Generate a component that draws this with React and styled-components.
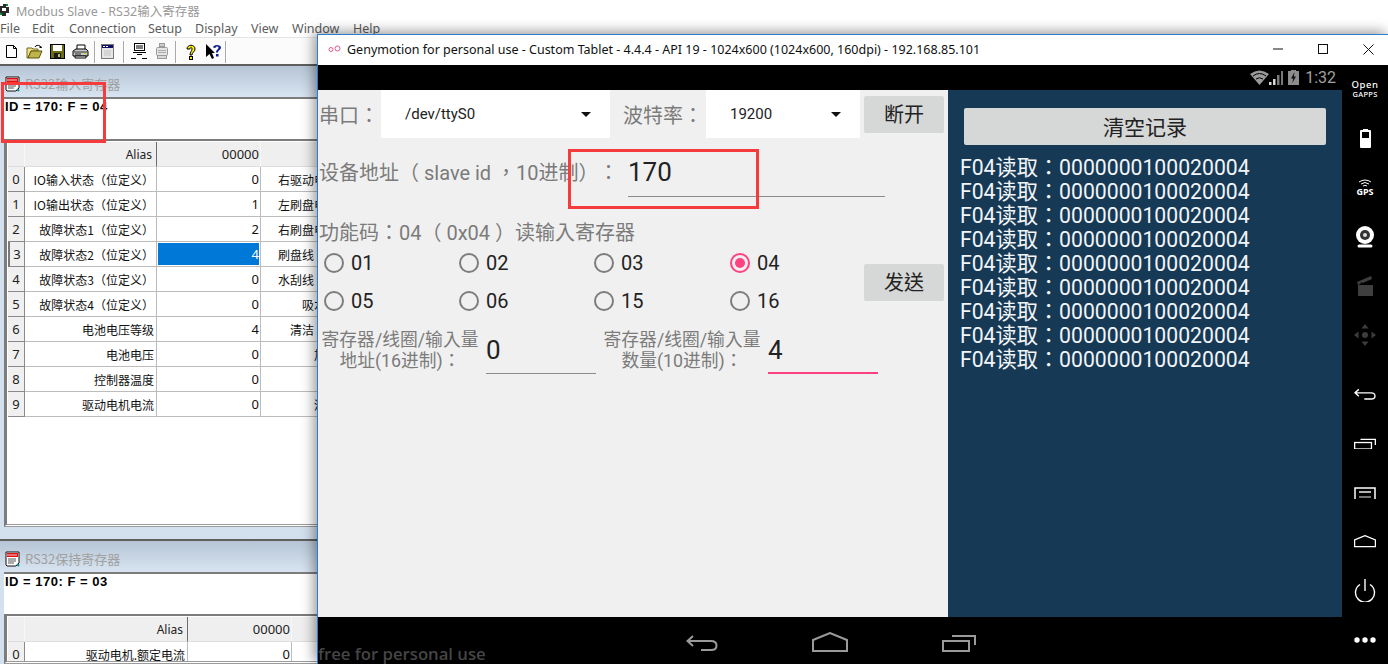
import React from 'react';
import styled, { createGlobalStyle } from 'styled-components';

const GlobalStyle = createGlobalStyle`
  html, body {
    margin: 0;
    padding: 0;
    background: #ffffff;
    overflow: hidden;
  }
  * { box-sizing: border-box; }
`;

const WIN_FONT = `"Noto Sans", "Noto Sans CJK SC", sans-serif`;
const CJK_FONT = `"Noto Sans CJK SC", "Noto Sans", sans-serif`;
const DROID_FONT = `Roboto, "Noto Sans CJK TC", sans-serif`;

// --- desktop ---

const Desktop = styled.div`
  position: relative;
  width: 1388px;
  height: 664px;
  overflow: hidden;
  background: #ffffff;
  text-spacing-trim: space-all;
`;

const Annotation = styled.div`
  position: absolute;
  left: ${(p) => p.$x}px;
  top: ${(p) => p.$y}px;
  width: ${(p) => p.$w}px;
  height: ${(p) => p.$h}px;
  border: 3px solid #f53b3b;
  z-index: 5;
`;

// --- modbus slave window ---

const SlaveWindow = styled.div`
  position: absolute;
  left: 0;
  top: 0;
  width: 1388px;
  height: 664px;
  display: flex;
  flex-direction: column;
  background: #ffffff;
`;

const SlaveTitle = styled.div`
  height: 20px;
  display: flex;
  align-items: center;
  gap: 7px;
  font: 12.5px ${WIN_FONT};
  color: #999999;
`;

const MenuBar = styled.div`
  height: 17px;
  display: flex;
  align-items: center;
  font: 12.5px ${WIN_FONT};
  color: #5c5c5c;
`;

const MenuItem = styled.span`
  width: ${(p) => p.$w}px;
  flex: none;
`;

const Toolbar = styled.div`
  height: 27px;
  width: 318px;
  display: flex;
  align-items: center;
  padding-top: 1px;
  border-top: 1px solid #e4e4e4;
  background: #fbfbfb;
`;

const ToolButton = styled.div`
  width: 23px;
  height: 23px;
  display: flex;
  align-items: center;
  justify-content: center;
  flex: none;
`;

const ToolSep = styled.div`
  width: 2px;
  height: 22px;
  flex: none;
  margin: 0 ${(p) => p.$r}px 0 ${(p) => p.$l}px;
  background: #a9a9a9;
  border-right: 1px solid #ffffff;
`;

const MdiArea = styled.div`
  flex: 1;
  min-height: 0;
  display: flex;
  flex-direction: column;
  background: #d3e0ee;
`;

const MdiChild = styled.div`
  flex: none;
  height: ${(p) => p.$h}px;
  display: flex;
  flex-direction: column;
  border-top: 2px solid #5f5f5f;
`;

const ChildTitle = styled.div`
  flex: none;
  height: 31px;
  display: flex;
  align-items: center;
  gap: 5px;
  padding: 4px 0 0 5px;
  background: linear-gradient(180deg, #b6c5d5 0%, #d8e4f1 100%);
  font: 13px ${CJK_FONT};
  color: #a0a0a0;
`;

const ChildBody = styled.div`
  flex: 1;
  min-height: 0;
  margin-left: 4px;
  display: flex;
  flex-direction: column;
  overflow: hidden;
`;

const ChildBottom = styled.div`
  flex: none;
  height: 12px;
`;

const NoteBox = styled.div`
  flex: none;
  height: 44px;
  padding: 1px 0 0 1px;
  background: #ffffff;
  border-top: 2px solid #7c7c7c;
  border-bottom: 2px solid #7c7c7c;
  font: 700 13px/14px "Liberation Sans", sans-serif;
  letter-spacing: 0.5px;
  color: #000000;
  white-space: nowrap;
`;

const GridPane = styled.div`
  flex: 1;
  min-height: 0;
  background: #ffffff;
  border-left: 3px solid #7c7c7c;
  border-bottom: 3px double #9a9a9a;
  padding-top: 1px;
  padding-left: 1px;
  overflow: hidden;
`;

const Grid = styled.div`
  display: grid;
  grid-template-columns: 17px ${(p) => p.$alias}px 104px 131px;
  grid-auto-rows: 25px;
  font: 12px ${CJK_FONT};
  color: #111111;
`;

const HeadCell = styled.div`
  display: flex;
  align-items: center;
  justify-content: flex-end;
  padding-right: ${(p) => (p.$strong ? 4 : 2)}px;
  background: #efefef;
  border-right: 1px solid ${(p) => (p.$strong ? '#6d6d6d' : '#f7f7f7')};
  border-bottom: 1px solid #dddddd;
  font: 12px ${WIN_FONT};
  color: #222222;
`;

const HeadValue = styled(HeadCell)`
  font-size: 13px;
  padding-right: 1px;
`;

const IndexCell = styled.div`
  display: flex;
  align-items: center;
  justify-content: center;
  background: #f0f0f0;
  border-right: 1px solid #8a8a8a;
  border-bottom: 1px solid #8a8a8a;
  border-left: ${(p) => (p.$active ? '2px solid #7a7a7a' : '0')};
  font: 13px ${WIN_FONT};
  color: #222222;
`;

const AliasCell = styled.div`
  display: flex;
  align-items: center;
  justify-content: flex-end;
  padding-right: 2px;
  white-space: nowrap;
  border-right: 1px solid #bcbcbc;
  border-bottom: 1px solid #bcbcbc;
`;

const ValueCell = styled.div`
  display: flex;
  align-items: center;
  justify-content: flex-end;
  padding-right: 1px;
  border-right: 1px solid #bcbcbc;
  border-bottom: 1px solid #bcbcbc;
  font: 13px ${WIN_FONT};
  background: #ffffff;
  ${(p) => p.$selected && `
    color: #ffffff;
    background: #0078d7;
    box-shadow: inset 0 0 0 1px #ffffff;
  `}
`;

const NextCell = styled.div`
  display: flex;
  align-items: center;
  padding-left: ${(p) => p.$indent}px;
  white-space: nowrap;
  overflow: hidden;
  border-bottom: 1px solid #bcbcbc;
`;

// --- genymotion window ---

const GenyWindow = styled.div`
  position: absolute;
  left: 317px;
  top: 34px;
  width: 1071px;
  height: 630px;
  display: flex;
  flex-direction: column;
  border-top: 1px solid #2b7cd3;
  border-left: 1px solid #2b7cd3;
  background: #000000;
  box-shadow: -3px -2px 12px rgba(0, 0, 0, 0.42);
  z-index: 2;
`;

const GenyTitle = styled.div`
  flex: none;
  height: 30px;
  display: flex;
  align-items: center;
  padding: 0 0 2px 10px;
  background: #ffffff;
  font: 12.5px "Noto Sans", sans-serif;
  color: #111111;
`;

const GenyCaption = styled.span`
  margin-left: 6px;
  white-space: nowrap;
  flex: 1;
`;

const CaptionButton = styled.div`
  width: 45px;
  height: 28px;
  padding-left: 5px;
  display: flex;
  align-items: center;
  justify-content: center;
  flex: none;
`;

const GenyBody = styled.div`
  flex: 1;
  min-height: 0;
  display: flex;
`;

const Device = styled.div`
  width: 1024px;
  flex: none;
  display: flex;
  flex-direction: column;
`;

const StatusBar = styled.div`
  height: 25px;
  flex: none;
  display: flex;
  align-items: center;
  justify-content: flex-end;
  gap: 5px;
  padding-right: 6px;
  background: #000000;
`;

const WifiSlot = styled.span`
  display: flex;
  margin-right: -5px;
`;

const Clock = styled.span`
  font: 16px Roboto, sans-serif;
  color: #a0a0a0;
  margin-left: 1px;
`;

const AppBody = styled.div`
  height: 527px;
  flex: none;
  display: flex;
  background: #f0f0f0;
`;

const FormPanel = styled.div`
  width: 630px;
  flex: none;
  padding-left: 1px;
  display: flex;
  flex-direction: column;
  font-family: ${DROID_FONT};
  color: #7b7b7b;
`;

const SerialRow = styled.div`
  height: 48px;
  flex: none;
  display: flex;
  align-items: center;
`;

const FieldLabel = styled.span`
  flex: none;
  width: ${(p) => p.$w}px;
  padding-left: ${(p) => p.$pad || 0}px;
  font-size: 20px;
  line-height: 24px;
  white-space: nowrap;
`;

const SerialLabel = styled(FieldLabel)`
  padding-top: 3px;
`;

const Spinner = styled.div`
  flex: none;
  width: ${(p) => p.$w}px;
  height: 48px;
  display: flex;
  align-items: center;
  justify-content: space-between;
  padding: 0 19px 0 24px;
  background: #ffffff;
  color: #222222;
  font-size: 15px;
  &::after {
    content: '';
    border-left: 5px solid transparent;
    border-right: 5px solid transparent;
    border-top: 5px solid #111111;
  }
`;

const ActionButton = styled.div`
  flex: none;
  width: ${(p) => p.$w}px;
  height: 37px;
  margin-left: ${(p) => p.$left || 0}px;
  padding-top: 2px;
  display: flex;
  align-items: center;
  justify-content: center;
  border-radius: 2px;
  background: #d6d7d7;
  color: #222222;
  font: 20px/24px ${DROID_FONT};
`;

const AddressRow = styled.div`
  height: 70px;
  flex: none;
  display: flex;
  align-items: center;
`;

const UnderlineInput = styled.div`
  flex: none;
  width: ${(p) => p.$w}px;
  height: 47px;
  padding-top: ${(p) => p.$top}px;
  border-bottom: ${(p) => (p.$focus ? '2px solid #ff4081' : '1px solid #8c8c8c')};
  color: #222222;
  font-size: 26px;
  line-height: 30px;
`;

const FunctionLabel = styled.div`
  margin-top: 14px;
  height: 22px;
  flex: none;
  font-size: 20px;
  line-height: 22px;
  white-space: nowrap;
`;

const RadioBlock = styled.div`
  flex: none;
  display: flex;
  align-items: center;
  height: 76px;
`;

const RadioGrid = styled.div`
  flex: none;
  width: 545px;
  display: grid;
  grid-template-columns: 135px 135px 136px 139px;
  grid-auto-rows: 38px;
  padding-left: 5px;
`;

const RadioItem = styled.div`
  display: flex;
  align-items: center;
  gap: 7px;
  color: #222222;
  font-size: 20px;
  line-height: 24px;
`;

const RadioMark = styled.span`
  width: 20px;
  height: 20px;
  flex: none;
  border-radius: 50%;
  border: 2px solid ${(p) => (p.$on ? '#ff4081' : '#7d7d7d')};
  display: flex;
  align-items: center;
  justify-content: center;
  &::after {
    content: '';
    display: ${(p) => (p.$on ? 'block' : 'none')};
    width: 10px;
    height: 10px;
    border-radius: 50%;
    background: #ff4081;
  }
`;

const RegisterRow = styled.div`
  flex: none;
  margin-top: 7px;
  display: flex;
  align-items: flex-start;
`;

const TwoLineLabel = styled.div`
  flex: none;
  width: ${(p) => p.$w}px;
  margin: 2px ${(p) => p.$after || 0}px 0 0;
  text-align: center;
  font-size: 17.8px;
  line-height: 21px;
`;

const LogPanel = styled.div`
  flex: 1;
  display: flex;
  flex-direction: column;
  padding: 18px 16px 0 12px;
  background: #163a56;
  font-family: ${DROID_FONT};
`;

const ClearButton = styled(ActionButton)`
  margin: 0 0 11px 4px;
  width: auto;
  align-self: stretch;
  font-size: 21px;
`;

const LogLine = styled.div`
  height: 24px;
  line-height: 24px;
  font-size: 21.2px;
  color: #f2f5f7;
  white-space: nowrap;
`;

const NavBar = styled.div`
  position: relative;
  flex: 1;
  display: flex;
  background: #000000;
`;

const NavSlot = styled.div`
  position: absolute;
  left: ${(p) => p.$x}px;
  top: ${(p) => p.$y}px;
  display: flex;
`;

const Watermark = styled.span`
  position: absolute;
  left: 0;
  top: 27px;
  font: 600 16.7px/20px "Open Sans", sans-serif;
  color: #454545;
  white-space: nowrap;
`;

const Sidebar = styled.div`
  width: 46px;
  flex: none;
  display: flex;
  flex-direction: column;
  color: #ffffff;
`;

const SideGroup = styled.div`
  flex: none;
  margin-bottom: ${(p) => p.$gap || 0}px;
`;

const SideSlot = styled.div`
  height: 49px;
  display: flex;
  flex-direction: column;
  align-items: center;
  justify-content: center;
`;

const GappsOpen = styled.span`
  font: 500 9.5px/10px "Noto Sans", sans-serif;
  letter-spacing: 0.6px;
  color: #ffffff;
`;

const GappsName = styled.span`
  font: 500 7.5px/9px "Noto Sans", sans-serif;
  letter-spacing: 0.3px;
  color: #ffffff;
`;

const GpsText = styled.span`
  font: 700 9px/10px "Noto Sans", sans-serif;
  color: #ffffff;
`;

// --- drawn icons ---

const AppIcon = () => (
  <svg width="9" height="12" viewBox="0 0 9 12">
    <path d="M0 2h3V0h3v3h3v6H6v3H2V9H0z" fill="#2a2a2a" />
    <rect x="2" y="4" width="4" height="3" fill="#ffffff" />
    <rect x="0" y="9" width="2" height="2" fill="#0a8f3c" />
    <rect x="6" y="0" width="2" height="2" fill="#0a8f3c" />
  </svg>
);

const DocIcon = () => (
  <svg width="15" height="16" viewBox="0 0 15 16">
    <path d="M1 1h13v11l-3 3H2l-1-1z" fill="#ffffff" stroke="#111" />
    <rect x="2" y="2" width="11" height="4" fill="#e01010" />
    <path d="M3 3v2M5 3v2M7 3v2M9 3v2M11 3v2" stroke="#fff" strokeWidth="0.8" />
    <path d="M3 8h8M3 10h8M3 12h6" stroke="#555" />
    <path d="M12 13l2 2" stroke="#118a8a" strokeWidth="2" />
  </svg>
);

const NewIcon = () => (
  <svg width="13" height="15" viewBox="0 0 13 15">
    <path d="M1.500 1.500h7l3 3v9h-10z" fill="#fff" stroke="#000" />
    <path d="M8.500 1.500v3h3" fill="none" stroke="#000" />
  </svg>
);

const OpenIcon = () => (
  <svg width="17" height="15" viewBox="0 0 17 15">
    <path d="M1 4h5l1 1h5v2H5l-3 7H1z" fill="#f3e08a" stroke="#6d6a1a" />
    <path d="M2 14l3-7h11l-3 7z" fill="#bdb44c" stroke="#5a5710" />
    <path d="M9 3c1-2 3-2 5-1l1 2" fill="none" stroke="#000" />
    <path d="M13 4h3l-1 -2z" fill="#000" />
  </svg>
);

const SaveIcon = () => (
  <svg width="15" height="15" viewBox="0 0 15 15">
    <rect x="0.5" y="0.5" width="14" height="14" fill="#6b6b10" stroke="#000" />
    <rect x="3" y="1" width="9" height="6" fill="#ffffff" />
    <rect x="4" y="9" width="7" height="5" fill="#1a1a1a" />
    <rect x="8" y="10" width="2" height="3" fill="#bdbd7a" />
  </svg>
);

const PrintIcon = () => (
  <svg width="17" height="15" viewBox="0 0 17 15">
    <path d="M5 1h8v5H5z" fill="#fff" stroke="#000" />
    <path d="M1 7l3-2h10l2 2v5H1z" fill="#c8c8c8" stroke="#000" />
    <path d="M3 12h11v2H3z" fill="#fff" stroke="#000" />
    <path d="M2 8h13M3 10h6" stroke="#333" />
    <rect x="12" y="9" width="2" height="1" fill="#d9d900" />
  </svg>
);

const WindowIcon = () => (
  <svg width="13" height="15" viewBox="0 0 13 15">
    <rect x="0.5" y="0.5" width="12" height="14" fill="#e6e6e6" stroke="#777" />
    <rect x="1" y="1" width="11" height="3" fill="#10106a" />
    <rect x="2" y="2" width="2" height="1" fill="#fff" />
    <rect x="5" y="2" width="2" height="1" fill="#fff" />
    <path d="M3 7h7M3 9h7M3 11h7" stroke="#c4c4c4" />
  </svg>
);

const ConnectIcon = () => (
  <svg width="16" height="17" viewBox="0 0 16 17">
    <rect x="3.500" y="0.500" width="10" height="7" fill="#fff" stroke="#000" />
    <path d="M5 3h7M5 5h7" stroke="#000" />
    <path d="M2 9.500h13M6 11.500h5" stroke="#000" />
    <path d="M0 15.500h5M11 15.500h5" stroke="#000" />
  </svg>
);

const DisconnectIcon = () => (
  <svg width="14" height="17" viewBox="0 0 14 17">
    <rect x="4.500" y="0.500" width="5" height="3" fill="#ccc" stroke="#9a9a9a" />
    <rect x="1.500" y="4.500" width="11" height="8" rx="1" fill="#e5e5e5" stroke="#9a9a9a" />
    <path d="M3 7.500h8M3 9.500h8" stroke="#aaa" />
    <rect x="2.500" y="12.500" width="9" height="3" fill="#d8d8d8" stroke="#9a9a9a" />
  </svg>
);

const HelpIcon = () => (
  <svg width="12" height="16" viewBox="0 0 12 16">
    <path
      d="M2 5c0-5 8-5 8 0 0 3-3 3-3 6H5c0-3 2-4 2-6 0-2-2-2-2 0z"
      fill="#f6ee00"
      stroke="#000"
    />
    <rect x="4.500" y="12.500" width="3" height="3" fill="#f6ee00" stroke="#000" />
  </svg>
);

const WhatsThisIcon = () => (
  <svg width="16" height="16" viewBox="0 0 16 16">
    <path d="M0 0l9 9H6l2 5-2 1-2.500-5L0 13z" fill="#000" />
    <path
      d="M7 3.500C7 0 15 0 15 3.500 15 6 12 6 12 8.500H10C10 5.500 12.500 5.500 12.500 3.500 12.500 2 9.500 2 9.500 4z"
      fill="#0a1a90"
    />
    <rect x="10" y="10" width="2.500" height="2.500" fill="#0a1a90" />
  </svg>
);

const MinIcon = () => (
  <svg width="10" height="10" viewBox="0 0 10 10"><path d="M0 5h10" stroke="#111" /></svg>
);
const MaxIcon = () => (
  <svg width="10" height="10" viewBox="0 0 10 10"><rect x="0.500" y="0.500" width="9" height="9" fill="none" stroke="#111" /></svg>
);
const CloseIcon = () => (
  <svg width="11" height="11" viewBox="0 0 11 11"><path d="M0.500 0.500l10 10M10.500 0.500l-10 10" stroke="#111" /></svg>
);
const GenyLogo = () => (
  <svg width="13" height="8" viewBox="0 0 13 8">
    <circle cx="3" cy="4.500" r="2" fill="none" stroke="#e8578f" />
    <circle cx="9.500" cy="3.500" r="2.500" fill="none" stroke="#e8578f" />
  </svg>
);

const WifiIcon = () => (
  <svg width="19" height="15" viewBox="0 0 19 15">
    <path d="M0 4Q9.500 -3 19 4L9.500 15z" fill="#9a9a9a" />
    <path d="M3 6Q9.500 1 16 6" fill="none" stroke="#000" />
    <path d="M6 9Q9.500 6.500 13 9" fill="none" stroke="#000" />
  </svg>
);
const SignalIcon = () => (
  <svg width="14" height="15" viewBox="0 0 14 15">
    <path d="M0 15h2.500v-3H0zM4 15h2.500V9H4z" fill="#d8d8d8" />
    <path d="M8 15h2.500V5H8zM12 15h2V1h-2z" fill="#7a7a7a" />
  </svg>
);
const StatusBattery = () => (
  <svg width="11" height="15" viewBox="0 0 11 15">
    <path d="M3 0h5v1h3v14H0V1h3z" fill="#8d8d8d" />
    <path d="M6.500 2L3 8.500h2.200L4.300 13 8 6.500H5.800z" fill="#111" />
  </svg>
);

const NavBack = ({ w = 32, color = '#9a9a9a' }) => (
  <svg width={w} height={(w * 18) / 32} viewBox="0 0 32 18">
    <path d="M7 2L1.500 7 7 12M1.500 7H25Q30.500 7 30.500 11.500T25 16H15" fill="none" stroke={color} strokeWidth={2} />
  </svg>
);
const NavHome = ({ w = 36, color = '#9a9a9a' }) => (
  <svg width={w} height={(w * 20) / 36} viewBox="0 0 36 20">
    <path d="M1 8L18 1 35 8V19H1Z" fill="none" stroke={color} strokeWidth={2} />
  </svg>
);
const NavRecent = ({ w = 34, color = '#9a9a9a' }) => (
  <svg width={w} height={(w * 18) / 34} viewBox="0 0 34 18">
    <rect x="1" y="7" width="26" height="10" fill="none" stroke={color} strokeWidth={2} />
    <path d="M10 2H33V11" fill="none" stroke={color} strokeWidth={2} />
  </svg>
);

const SideBattery = () => (
  <svg width="11" height="19" viewBox="0 0 11 19">
    <path d="M3 0h5v1h2a1 1 0 0 1 1 1v16a1 1 0 0 1-1 1H1a1 1 0 0 1-1-1V2a1 1 0 0 1 1-1h2z" fill="#fff" />
    <rect x="2" y="3" width="7" height="6" fill="#000" />
  </svg>
);
const SideGpsWaves = () => (
  <svg width="14" height="8" viewBox="0 0 14 8">
    <path d="M1 3Q7 -1 13 3M3 5Q7 2 11 5M5 7Q7 5.500 9 7" fill="none" stroke="#fff" />
  </svg>
);
const SideCam = () => (
  <svg width="18" height="22" viewBox="0 0 18 22">
    <circle cx="9" cy="9" r="9" fill="#fff" />
    <circle cx="9" cy="9" r="5" fill="#333" />
    <circle cx="9" cy="9" r="2" fill="#ddd" />
    <path d="M3 20h12" stroke="#fff" strokeWidth="3" strokeLinecap="round" />
  </svg>
);
const SideClapper = () => (
  <svg width="16" height="20" viewBox="0 0 16 20">
    <rect x="1" y="9" width="15" height="11" fill="#3f3f3f" />
    <path d="M0 6L14 0l1 3L1 9z" fill="#3f3f3f" />
    <path d="M3 9l2-3M8 9l2-3M12 9l2-3" stroke="#000" />
  </svg>
);
const SideDpad = () => (
  <svg width="22" height="22" viewBox="0 0 22 22" fill="#3c3c3c">
    <path d="M11 0l3.500 4.500h-7zM11 22l3.500-4.500h-7zM0 11l4.500-3.500v7zM22 11l-4.500-3.500v7z" />
    <circle cx="11" cy="11" r="3" />
  </svg>
);
const SideMenu = () => (
  <svg width="22" height="12" viewBox="0 0 22 12">
    <path d="M1 12V1H21V12" fill="none" stroke="#fff" strokeWidth="1.500" />
    <path d="M5 5h12" stroke="#eee" strokeWidth="1.500" />
    <path d="M5 10h12" stroke="#999" strokeWidth="1.500" />
  </svg>
);
const SidePower = () => (
  <svg width="22" height="23" viewBox="0 0 22 23">
    <path d="M6 5.500A9.500 9.500 0 1 0 16 5.500" fill="none" stroke="#fff" strokeWidth="1.400" />
    <path d="M11 0V12" stroke="#fff" strokeWidth="1.400" />
  </svg>
);
const SideDots = () => (
  <svg width="22" height="6" viewBox="0 0 22 6" fill="#fff">
    <circle cx="3" cy="3" r="2.700" />
    <circle cx="11" cy="3" r="2.700" />
    <circle cx="19" cy="3" r="2.700" />
  </svg>
);

// --- data ---

const inputRows = [
  { alias: 'IO输入状态（位定义）', value: 0, next: '右驱动电', indent: 17 },
  { alias: 'IO输出状态（位定义）', value: 1, next: '左刷盘电', indent: 17 },
  { alias: '故障状态1（位定义）', value: 2, next: '右刷盘电', indent: 17 },
  { alias: '故障状态2（位定义）', value: 4, next: '刷盘线', indent: 17, selected: true },
  { alias: '故障状态3（位定义）', value: 0, next: '水刮线', indent: 17 },
  { alias: '故障状态4（位定义）', value: 0, next: '吸水', indent: 41 },
  { alias: '电池电压等级', value: 4, next: '清洁', indent: 29 },
  { alias: '电池电压', value: 0, next: '加', indent: 53 },
  { alias: '控制器温度', value: 0, next: '', indent: 53 },
  { alias: '驱动电机电流', value: 0, next: '滚', indent: 53 },
];

const radios = ['01', '02', '03', '04', '05', '06', '15', '16'];
const menus = [
  ['File', 32], ['Edit', 37], ['Connection', 79], ['Setup', 47],
  ['Display', 56], ['View', 41], ['Window', 61], ['Help', 40],
];

const RegisterGrid = ({ alias, rows }) => (
  <Grid $alias={alias}>
    <HeadCell />
    <HeadCell $strong>Alias</HeadCell>
    <HeadValue>00000</HeadValue>
    <HeadCell />
    {rows.map((row, index) => (
      <React.Fragment key={index}>
        <IndexCell $active={row.selected}>{index}</IndexCell>
        <AliasCell>{row.alias}</AliasCell>
        <ValueCell $selected={row.selected}>{row.value}</ValueCell>
        <NextCell $indent={row.indent}>{row.next}</NextCell>
      </React.Fragment>
    ))}
  </Grid>
);

const App = () => {
  return (
    <Desktop>
      <GlobalStyle />

      <SlaveWindow>
        <SlaveTitle>
          <AppIcon />
          <span>Modbus Slave - RS32输入寄存器</span>
        </SlaveTitle>
        <MenuBar>
          {menus.map(([name, w]) => (
            <MenuItem key={name} $w={w}>{name}</MenuItem>
          ))}
        </MenuBar>
        <Toolbar>
          <ToolButton><NewIcon /></ToolButton>
          <ToolButton><OpenIcon /></ToolButton>
          <ToolButton><SaveIcon /></ToolButton>
          <ToolButton><PrintIcon /></ToolButton>
          <ToolSep $l={2} $r={0} />
          <ToolButton><WindowIcon /></ToolButton>
          <ToolSep $l={4} $r={2} />
          <ToolButton><ConnectIcon /></ToolButton>
          <ToolButton><DisconnectIcon /></ToolButton>
          <ToolSep $l={2} $r={2} />
          <ToolButton><HelpIcon /></ToolButton>
          <ToolButton><WhatsThisIcon /></ToolButton>
          <ToolSep $l={0} $r={0} />
        </Toolbar>
        <MdiArea>
          <MdiChild $h={475}>
            <ChildTitle><DocIcon />RS32输入寄存器</ChildTitle>
            <ChildBody>
              <NoteBox>ID = 170: F = 04</NoteBox>
              <GridPane>
                <RegisterGrid alias={132} rows={inputRows} />
              </GridPane>
            </ChildBody>
            <ChildBottom />
          </MdiChild>
          <MdiChild $h={125}>
            <ChildTitle><DocIcon />RS32保持寄存器</ChildTitle>
            <ChildBody>
              <NoteBox>ID = 170: F = 03</NoteBox>
              <GridPane>
                <RegisterGrid
                  alias={163}
                  rows={[{ alias: '驱动电机.额定电流', value: 0, next: '', indent: 0 }]}
                />
              </GridPane>
            </ChildBody>
          </MdiChild>
        </MdiArea>
      </SlaveWindow>

      <GenyWindow>
        <GenyTitle>
          <GenyLogo />
          <GenyCaption>
            Genymotion for personal use - Custom Tablet - 4.4.4 - API 19 - 1024x600 (1024x600, 160dpi) - 192.168.85.101
          </GenyCaption>
          <CaptionButton><MinIcon /></CaptionButton>
          <CaptionButton><MaxIcon /></CaptionButton>
          <CaptionButton><CloseIcon /></CaptionButton>
        </GenyTitle>
        <GenyBody>
          <Device>
            <StatusBar>
              <WifiSlot><WifiIcon /></WifiSlot>
              <SignalIcon />
              <StatusBattery />
              <Clock>1:32</Clock>
            </StatusBar>
            <AppBody>
              <FormPanel>
                <SerialRow>
                  <SerialLabel $w={62}>串口：</SerialLabel>
                  <Spinner $w={229}>/dev/ttyS0</Spinner>
                  <SerialLabel $w={96} $pad={13}>波特率：</SerialLabel>
                  <Spinner $w={154}>19200</Spinner>
                  <ActionButton $w={80} $left={4}>断开</ActionButton>
                </SerialRow>
                <AddressRow>
                  <FieldLabel $w={309}>设备地址（ slave id ，10进制）：</FieldLabel>
                  <UnderlineInput $w={257} $top={7}>170</UnderlineInput>
                </AddressRow>
                <FunctionLabel>功能码：04（ 0x04 ）读输入寄存器</FunctionLabel>
                <RadioBlock>
                  <RadioGrid>
                    {radios.map((code) => (
                      <RadioItem key={code}>
                        <RadioMark $on={code === '04'} />
                        {code}
                      </RadioItem>
                    ))}
                  </RadioGrid>
                  <ActionButton $w={80}>发送</ActionButton>
                </RadioBlock>
                <RegisterRow>
                  <TwoLineLabel $w={162} $after={5}>寄存器/线圈/输入量<br />地址(16进制)：</TwoLineLabel>
                  <UnderlineInput $w={110} $top={8}>0</UnderlineInput>
                  <TwoLineLabel $w={172}>寄存器/线圈/输入量<br />数量(10进制)：</TwoLineLabel>
                  <UnderlineInput $w={110} $top={8} $focus>4</UnderlineInput>
                </RegisterRow>
              </FormPanel>
              <LogPanel>
                <ClearButton>清空记录</ClearButton>
                {Array.from({ length: 9 }, (_, i) => (
                  <LogLine key={i}>F04读取：0000000100020004</LogLine>
                ))}
              </LogPanel>
            </AppBody>
            <NavBar>
              <Watermark>free for personal use</Watermark>
              <NavSlot $x={368} $y={17}><NavBack /></NavSlot>
              <NavSlot $x={494} $y={15}><NavHome /></NavSlot>
              <NavSlot $x={624} $y={17}><NavRecent /></NavSlot>
            </NavBar>
          </Device>
          <Sidebar>
            <SideGroup $gap={11}>
              <SideSlot>
                <GappsOpen>Open</GappsOpen>
                <GappsName>GAPPS</GappsName>
              </SideSlot>
              <SideSlot><SideBattery /></SideSlot>
              <SideSlot>
                <SideGpsWaves />
                <GpsText>GPS</GpsText>
              </SideSlot>
              <SideSlot><SideCam /></SideSlot>
              <SideSlot><SideClapper /></SideSlot>
              <SideSlot><SideDpad /></SideSlot>
            </SideGroup>
            <SideGroup>
              <SideSlot><NavBack w={22} color="#ffffff" /></SideSlot>
              <SideSlot><NavRecent w={22} color="#ffffff" /></SideSlot>
              <SideSlot><SideMenu /></SideSlot>
              <SideSlot><NavHome w={22} color="#ffffff" /></SideSlot>
              <SideSlot><SidePower /></SideSlot>
              <SideSlot><SideDots /></SideSlot>
            </SideGroup>
          </Sidebar>
        </GenyBody>
      </GenyWindow>

      <Annotation $x={1} $y={82} $w={105} $h={61} />
      <Annotation $x={568} $y={149} $w={191} $h={60} />
    </Desktop>
  );
};

export default App;
